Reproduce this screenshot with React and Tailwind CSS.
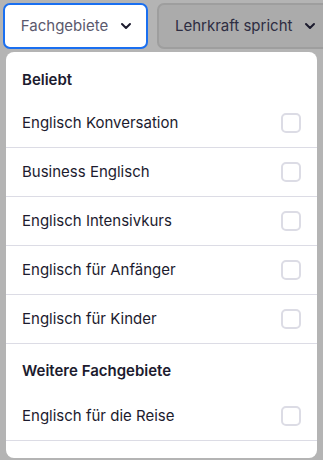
import { ChevronDown } from 'lucide-react'

const beliebt = [
  'Englisch Konversation',
  'Business Englisch',
  'Englisch Intensivkurs',
  'Englisch für Anfänger',
  'Englisch für Kinder',
]

function Item({ label }) {
  return (
    <div className="flex h-[49px] items-center justify-between border-b border-[#dcdce5] pl-4 pr-[16px]">
      <span className="text-[15px] text-[#1c1b2e]">{label}</span>
      <span className="h-5 w-5 rounded-[5px] border-2 border-[#dcdce5] bg-white" />
    </div>
  )
}

export default function App() {
  return (
    <div
      className="relative h-[460px] w-[323px] overflow-hidden bg-[#b4b4b4]"
      style={{ fontFamily: 'Inter, "Noto Sans", sans-serif' }}
    >
      <div className="flex gap-[9px] pl-[3px] pt-[3px]">
        <button className="flex h-[46px] w-[145px] shrink-0 items-center justify-center gap-[10px] rounded-[7px] border-2 border-[#1a6ff0] bg-white pl-1 text-[15px] text-[#5b596d]">
          Fachgebiete
          <ChevronDown size={16} strokeWidth={3} className="text-[#1c1b2e]" />
        </button>
        <button className="flex h-[46px] shrink-0 items-center gap-[10px] rounded-[7px] border-2 border-[#9e9e9e] bg-[#ababab] pl-[16px] pr-3 text-[15px] text-[#2e2d42] whitespace-nowrap">
          Lehrkraft spricht
          <ChevronDown size={16} strokeWidth={3} className="text-[#1c1b2e]" />
        </button>
      </div>

      <div className="mx-[6px] mt-[3px] w-[311px] overflow-hidden rounded-[8px] bg-white">
        <div className="flex h-[47px] items-center pl-4 pt-[9px] text-[15px] font-semibold text-[#1c1b2e]">
          Beliebt
        </div>
        {beliebt.map(l => (
          <Item key={l} label={l} />
        ))}
        <div className="flex h-[48px] items-center pl-4 pt-[6px] text-[15px] font-semibold text-[#1c1b2e]">
          Weitere Fachgebiete
        </div>
        <Item label="Englisch für die Reise" />
        <div className="h-[17px]" />
      </div>
    </div>
  )
}
